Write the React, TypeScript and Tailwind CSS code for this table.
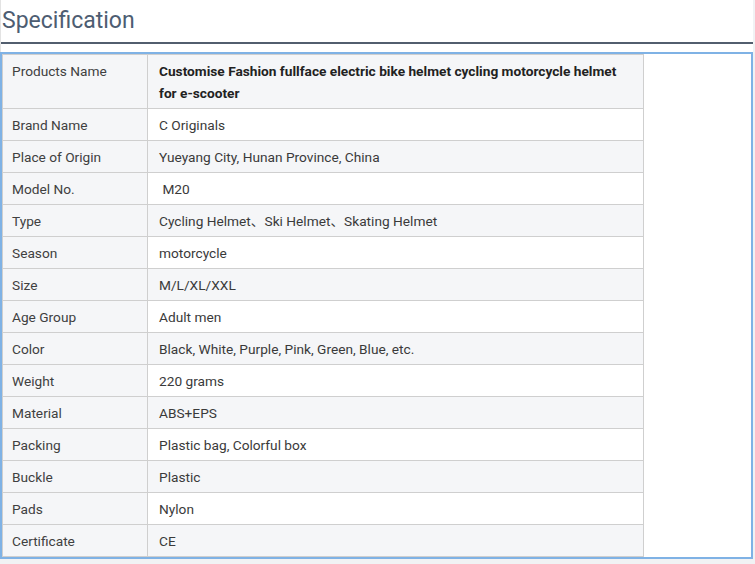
const rows: [string, string][] = [
  ["Products Name", "Customise Fashion fullface electric bike helmet cycling motorcycle helmet for e-scooter"],
  ["Brand Name", "C Originals"],
  ["Place of Origin", "Yueyang City, Hunan Province, China"],
  ["Model No.", "\u00a0M20"],
  ["Type", "Cycling Helmet、Ski Helmet、Skating Helmet"],
  ["Season", "motorcycle"],
  ["Size", "M/L/XL/XXL"],
  ["Age Group", "Adult men"],
  ["Color", "Black, White, Purple, Pink, Green, Blue, etc."],
  ["Weight", "220 grams"],
  ["Material", "ABS+EPS"],
  ["Packing", "Plastic bag, Colorful box"],
  ["Buckle", "Plastic"],
  ["Pads", "Nylon"],
  ["Certificate", "CE"],
];

export default function App() {
  return (
    <div className="w-[755px] h-[564px] bg-[#f1f2f4] font-['Roboto','Noto_Sans_CJK_SC',sans-serif]">
      <div className="w-[753px] bg-white border-l border-[#e3e3e3]">
        {/* heading */}
        <div className="h-[44px] border-b-2 border-[#525e6e]">
          <h2 className="text-[23px] leading-[42px] text-[#4d5d72] pl-[1px]">Specification</h2>
        </div>
        <div className="h-[8px]" />
        {/* spec table */}
        <div className="border-2 border-[#7fb2e5] -ml-px">
          <table className="border-collapse w-[642px] text-[13.7px] text-[#3a3a3a]">
            <tbody>
              {rows.map(([label, value], i) => (
                <tr key={label} className={i === 0 ? "h-[54px]" : "h-[32px]"}>
                  <td className="w-[145px] align-top bg-[#f5f6f8] border border-[#cfcfcf] pl-[9px] pt-[5px] pb-[4px] leading-[22px] text-[#404040]">
                    {label}
                  </td>
                  <td
                    className={`align-top border border-[#cfcfcf] pl-[11px] pr-[8px] pt-[5px] pb-[4px] leading-[22px] ${
                      i % 2 === 0 ? "bg-[#f5f6f8]" : "bg-white"
                    } ${i === 0 ? "font-bold text-[#222]" : ""}`}
                  >
                    {value}
                  </td>
                </tr>
              ))}
            </tbody>
          </table>
        </div>
      </div>
    </div>
  );
}
